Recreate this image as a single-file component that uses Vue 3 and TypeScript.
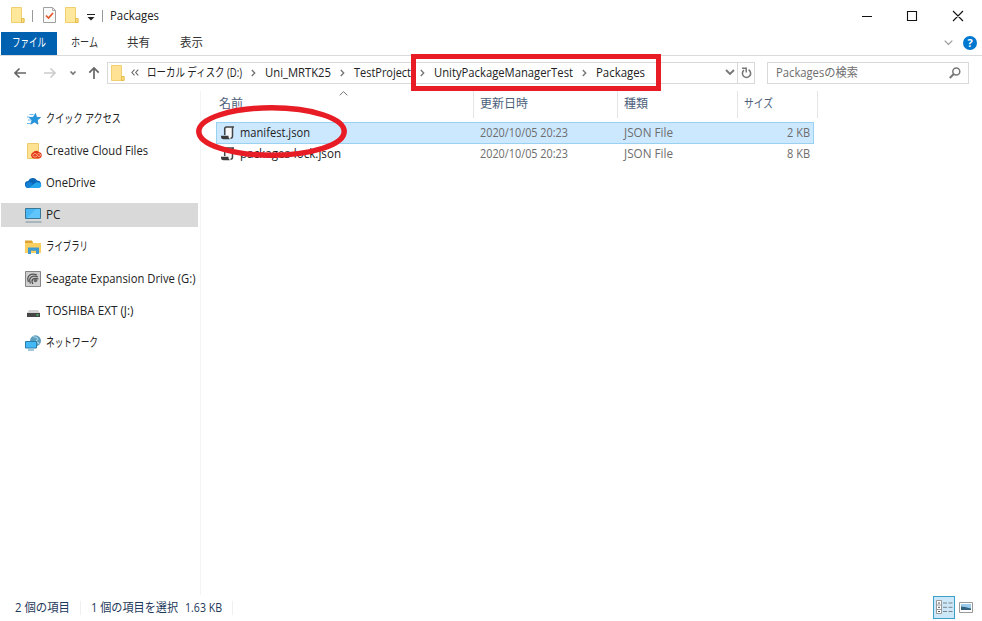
<script setup lang="ts">
import { h } from 'vue'

interface LabelProps { text: string; w: number }

const Label = (props: LabelProps) =>
  h('svg', { width: props.w, height: 20, style: 'display:block;flex:none;overflow:visible' }, [
    h('text', { x: 0, y: 14, fill: 'currentColor', textLength: props.w, lengthAdjust: 'spacingAndGlyphs' }, props.text),
  ])
Label.props = ['text', 'w']

const crumbs: LabelProps[] = [
  { text: 'ローカル ディスク (D:)', w: 95 },
  { text: 'Uni_MRTK25', w: 66 },
  { text: 'TestProject', w: 57 },
  { text: 'UnityPackageManagerTest', w: 139 },
  { text: 'Packages', w: 49 },
]

const places = [
  { id: 'quick', text: 'クイック アクセス', w: 75 },
  { id: 'cloud', text: 'Creative Cloud Files', w: 102 },
  { id: 'onedrive', text: 'OneDrive', w: 49.5 },
  { id: 'pc', text: 'PC', w: 14.5 },
  { id: 'library', text: 'ライブラリ', w: 42 },
  { id: 'seagate', text: 'Seagate Expansion Drive (G:)', w: 149.5 },
  { id: 'toshiba', text: 'TOSHIBA EXT (J:)', w: 87.5 },
  { id: 'network', text: 'ネットワーク', w: 52 },
]

const columns: LabelProps[] = [
  { text: '名前', w: 24 },
  { text: '更新日時', w: 48 },
  { text: '種類', w: 24 },
  { text: 'サイズ', w: 29 },
]

const files = [
  { name: 'manifest.json', w: 70, size: '2 KB', selected: true },
  { name: 'packages-lock.json', w: 101, size: '8 KB', selected: false },
]
</script>

<template>
  <div class="window">
    <header class="titlebar">
      <svg class="folder" width="14" height="16"><path d="M.5.5h10v11h2.500v4H.5z" fill="#ffe89c" stroke="#efcf70" /><path d="M10.500 11.500h2.500v4h-2.500z" fill="#ffdf7d" stroke="#e5bd4e" /></svg>
      <i class="bar first"></i>
      <svg class="check" width="13" height="16"><path d="M.5.5h9l3 3v12H.5z" fill="#fafafa" stroke="#a0a0a0" /><path d="M9.500.5v3h3" fill="none" stroke="#aaa" /><path d="M3 8.500l2.500 2.500 4.500-5" fill="none" stroke="#e4572b" stroke-width="1.700" /></svg>
      <svg class="folder second" width="14" height="16"><path d="M.5.5h10v11h2.500v4H.5z" fill="#ffe89c" stroke="#efcf70" /><path d="M10.500 11.500h2.500v4h-2.500z" fill="#ffdf7d" stroke="#e5bd4e" /></svg>
      <svg class="customize" width="8" height="8"><path d="M0 1.500h8" stroke="#222" /><path d="M.5 4h7L4 7.500z" fill="#222" /></svg>
      <i class="bar second-bar"></i>
      <Label text="Packages" :w="49" />
      <svg class="controls" width="104" height="12"><path d="M1 6.500h10M46.500 1.500h9v9h-9zM92 1l10 10M102 1L92 11" fill="none" stroke="#111" stroke-width="1.100" /></svg>
    </header>
    <nav class="tabs">
      <div class="tab file"><Label text="ファイル" :w="34" /></div>
      <div class="tab home"><Label text="ホーム" :w="27" /></div>
      <div class="tab share"><Label text="共有" :w="23" /></div>
      <div class="tab"><Label text="表示" :w="23" /></div>
      <svg class="expand" width="9" height="6"><path d="M.7.7l3.800 3.800L8.300.7" fill="none" stroke="#999" stroke-width="1.200" /></svg>
      <div class="help">?</div>
    </nav>
    <div class="addressbar">
      <svg class="nav-icons" width="88" height="14"><g fill="none" stroke-width="1.700"><path d="M13 7H2M6.500 2.500L2 7l4.500 4.500" stroke="#666" /><path d="M31 7h11M37.500 2.500L42 7l-4.500 4.500" stroke="#ccc" /><path d="M57.500 5.500l2.500 2.500 2.500-2.500" stroke="#777" /><path d="M81 13V2M76.300 6.700L81 2l4.700 4.700" stroke="#666" /></g></svg>
      <div class="path">
        <svg width="14" height="16"><path d="M.5.5h10v11h2.500v4H.5z" fill="#ffe293" stroke="#efcf70" /><path d="M10.500 11.500h2.500v4h-2.500z" fill="#ffdf7d" stroke="#e5bd4e" /></svg>
        <svg class="ancestors" width="8" height="7"><path d="M3.500.7L.9 3.500l2.600 2.800M7.300.7L4.700 3.500l2.600 2.800" fill="none" stroke="#666" stroke-width="1.100" /></svg>
        <template v-for="(c, i) in crumbs" :key="c.text">
          <svg v-if="i" class="sep" width="23" height="8"><path d="M9.800 1l2.900 3-2.900 3" fill="none" stroke="#777" stroke-width="1.400" /></svg>
          <Label :text="c.text" :w="c.w" />
        </template>
        <svg class="history" width="10" height="7"><path d="M1 1l4 4 4-4" fill="none" stroke="#777" stroke-width="1.900" /></svg>
        <div class="refresh">
          <svg width="11" height="12"><path d="M3 3.100A4.100 4.100 0 1 0 7.600 2.800" fill="none" stroke="#777" stroke-width="1.600" /><path d="M1 1.200h4.200v4.300" fill="none" stroke="#777" stroke-width="1.500" /></svg>
        </div>
      </div>
      <div class="search">
        <Label text="Packagesの検索" :w="82" />
        <svg width="12" height="12"><circle cx="7.300" cy="4.500" r="3.500" fill="none" stroke="#777" stroke-width="1.500" /><path d="M4.800 7L.8 11" stroke="#777" stroke-width="2" /></svg>
      </div>
    </div>
    <main class="body">
      <aside class="sidebar">
        <div v-for="p in places" :key="p.id" class="place" :class="{ active: p.id === 'pc' }">
          <svg class="place-icon" width="17" height="16" viewBox="0 0 17 16">
            <g v-if="p.id === 'quick'"><path d="M10.500 2.500l1 3.800 4 .2-3.200 2.600.7 4.100-3.500-2.200-3.800 2.200 1.400-4.200-3-2.500 4.200-.2z" fill="#2496e0" stroke="#2388cc" stroke-width=".8" /><path d="M4.500 3.500h4M2 6h2.500M3 9h3M2 12.500h3" stroke="#64baf0" /></g>
            <g v-else-if="p.id === 'cloud'"><path d="M2.500.5h11v15h-11z" fill="#ffe393" stroke="#eccb70" /><path d="M9 15.500a3.300 3.300 0 0 1-1-6.300 4 4 0 0 1 6-.2 3.300 3.300 0 0 1 0 6.500z" fill="#e33a1e" /><path d="M12 13.500c-5 2-5-3-2-3 2 0 2 3 4 3 2.500 0 2-4-1.500-2.500" fill="none" stroke="#ffb98a" stroke-width=".9" /></g>
            <g v-else-if="p.id === 'onedrive'"><path d="M3.500 13a3.500 3.500 0 0 1-.3-7A5 5 0 0 1 12 5.500 3.800 3.800 0 0 1 13 13z" fill="#0865b7" /><path d="M3 13l8-5.500c3-.9 5 .8 5.300 3.100 0 1.500-1.300 2.400-2.800 2.400z" fill="#23a5ee" /><path d="M.5 9.500c2-3 5-2.500 7-.8L3.800 13C1.800 13 .5 11.500.5 9.500z" fill="#1482d4" /></g>
            <g v-else-if="p.id === 'pc'"><path d="M.5 1.500h15v10H.5z" fill="#49b7f4" stroke="#397797" /><path d="M2 11L11 2h4v9z" fill="#6ccdff" opacity=".65" /><path d="M.5 15h16" stroke="#7692a5" /></g>
            <g v-else-if="p.id === 'library'"><path d="M0 2h7l1 2h8v10H0z" fill="#f9cf62" /><path d="M0 1.500h7l1 2.500H0z" fill="#dca332" /><path d="M3 15V8.500h11V15h-3v-3.300H6V15z" fill="#3f9bcf" /></g>
            <g v-else-if="p.id === 'seagate'"><path d="M.5.5h15v15H.5z" fill="#cfcfcf" stroke="#858585" /><path d="M3.500 11C1 5 6 1.500 12 4M5.500 12.500C3 7 7 3.500 13 6M8 13C5.500 9 8 6 13.500 8" fill="none" stroke="#555" stroke-width="1.300" /><circle cx="10.500" cy="9.500" r="1.800" fill="#666" /></g>
            <g v-else-if="p.id === 'toshiba'"><path d="M4 7h9l2 3H2z" fill="#d2d2d2" /><path d="M2 10h13v4H2z" fill="#454545" /><path d="M11.500 12h2" stroke="#53d67b" stroke-width="1.300" /></g>
            <g v-else><circle cx="10.500" cy="5.800" r="5.500" fill="#5b9dbd" /><path d="M8 1.500c2 1 3.500 0 4.500 2s-2 1-1 3 2 1 2.500 2.500" fill="none" stroke="#a4d0e3" stroke-width="1.300" /><path d="M.5 6.500h11v6.500H.5z" fill="#43b9f7" stroke="#287da9" /><path d="M3 15h6" stroke="#4391b9" /></g>
          </svg>
          <Label :text="p.text" :w="p.w" />
        </div>
      </aside>
      <section class="files">
        <div class="columns grid">
          <div v-for="c in columns" :key="c.text" class="column"><Label :text="c.text" :w="c.w" /></div>
          <svg class="sort" width="9" height="5"><path d="M.7 4.300L4.500.6l3.800 3.700" fill="none" stroke="#777" /></svg>
        </div>
        <div v-for="f in files" :key="f.name" class="row grid" :class="{ selected: f.selected }">
          <div class="name">
            <svg width="14" height="14"><path d="M4 1h8v9q0 2.500-2.500 2.500H5V1z" fill="#f8f8f8" /><path d="M3.700 9V3Q3.700 1 5.700 1H13M11.500 1.500V10q0 2.300-2 2.300" fill="none" stroke="#444" stroke-width="1.500" /><path d="M0 9.800h7.500v1.200q0 1 1.500 2.200H2.500Q0 13.200 0 11z" fill="#3b3b3b" /></svg>
            <Label :text="f.name" :w="f.w" />
          </div>
          <div class="detail"><Label text="2020/10/05 20:23" :w="88" /></div>
          <div class="detail"><Label text="JSON File" :w="49" /></div>
          <div class="detail size"><Label :text="f.size" :w="23" /></div>
        </div>
      </section>
    </main>
    <footer class="status">
      <Label text="2 個の項目" :w="55" /><i class="divider"></i>
      <Label text="1 個の項目を選択" :w="87" /><Label class="bytes" text="1.63 KB" :w="37" /><i class="divider last"></i>
      <div class="views">
        <div class="details-view"><svg width="17" height="15"><path d="M.5.500h5v13h-5zM.5 5h5M.5 9.500h5" fill="#fff" stroke="#999" /><path d="M2 3h2M2 7.300h2M2 11.500h2" stroke="#555" /><path d="M7 3h4M12.500 3h4M7 7.300h4M12.500 7.300h4M7 11.500h4M12.500 11.500h4" stroke="#7d8589" /></svg></div>
        <svg width="14" height="11"><path d="M.5.5h13v10H.5z" fill="#fff" stroke="#999" /><path d="M2 2h10v6H2z" fill="#9bcbed" /><path d="M2 4.500l4 .5 6 1.500V8H2z" fill="#34617e" /></svg>
      </div>
    </footer>
    <svg class="annotation" width="982" height="621"><g fill="none" stroke="#e81c25" stroke-width="5"><path d="M413.500 56.500h245v32h-245z" /><ellipse cx="271.500" cy="131.500" rx="72.700" ry="23.700" stroke-width="5.500" /></g></svg>
  </div>
</template>

<style>
body { margin: 0; background: #fff; }
</style>
<style scoped>
.window { position: relative; width: 982px; height: 621px; overflow: hidden; display: flex; flex-direction: column; background: #fff; color: #222; font: 12px "Open Sans", "Noto Sans CJK JP", sans-serif; }
.window * { box-sizing: border-box; }
svg { display: block; flex: none; }
.titlebar { height: 31px; display: flex; align-items: center; padding: 1px 0 0 11px; flex: none; }
.folder, .check { margin-bottom: 2px; }
.bar { width: 1px; height: 12px; margin-bottom: 1px; background: #999; }
.first { margin: 0 11px 1px 7px; }
.check { margin-left: -1px; }
.second { margin-left: 9px; }
.customize { margin: 2px 7px 0 8px; }
.second-bar { margin-right: 7px; }
.controls { margin-left: auto; margin-right: 17px; margin-bottom: 1px; }
.tabs { height: 25px; display: flex; align-items: center; border-bottom: 1px solid #dadbdc; flex: none; color: #333; }
.tab { display: flex; align-items: center; height: 23px; }
.file { width: 56px; margin: 0 14px 0 1px; padding-left: 11px; background: #0061b1; color: #fff; }
.home { margin-right: 29px; }
.share { margin-right: 30px; }
.expand { margin-left: auto; margin-right: 10px; }
.help { width: 14px; height: 14px; margin-right: 5px; border-radius: 50%; background: #0078d0; color: #fff; font-weight: 700; font-size: 11px; line-height: 14px; text-align: center; }
.addressbar { height: 35px; display: flex; align-items: center; padding: 0 13px 2px; flex: none; }
.nav-icons { margin-right: 6px; }
.path { height: 22px; width: 648px; border: 1px solid #d9d9d9; display: flex; align-items: center; padding-left: 3px; }
.ancestors { margin: 0 8px 0 6px; }
.history { margin-left: auto; margin-right: 2px; }
.refresh { width: 17px; height: 20px; padding-left: 1px; border-left: 1px solid #d9d9d9; display: flex; align-items: center; justify-content: center; }
.search { width: 202px; height: 22px; margin-left: 12px; padding: 0 7px 0 8px; border: 1px solid #d9d9d9; display: flex; align-items: center; justify-content: space-between; color: #6d6d6d; }
.body { flex: 1; display: flex; min-height: 0; }
.sidebar { width: 201px; padding: 16px 2px 0 1px; border-right: 1px solid #f4f4f4; display: flex; flex-direction: column; gap: 8px; }
.place { height: 24px; display: flex; align-items: center; gap: 4px; padding-left: 24px; }
.active { background: #d9d9d9; }
.files { width: 617px; }
.grid { display: grid; grid-template-columns: 257px 144px 120px 1fr; }
.columns { position: relative; height: 27px; margin-left: 16px; color: #4c607a; }
.column { display: flex; align-items: center; border-right: 1px solid #e5e5e5; padding: 0 0 1px 6px; }
.column:first-child { padding-left: 2px; }
.sort { position: absolute; left: 122px; top: 0; }
.row { height: 20px; width: 598px; margin-left: 15px; align-items: center; }
.selected { height: 22px; margin-top: 4px; background: #cce8ff; outline: 1px solid #99d1f3; outline-offset: -1px; }
.name { display: flex; align-items: center; gap: 5px; padding-left: 5px; }
.detail { color: #6d6d6d; padding-left: 7px; }
.size { display: flex; justify-content: flex-end; padding: 0 4px 0 0; }
.status { height: 25px; margin-bottom: 1px; display: flex; align-items: center; padding: 1px 9px 0 15px; color: #1e395b; flex: none; }
.divider { width: 1px; height: 14px; margin: 0 10px; background: #f0f0f0; }
.bytes { margin-left: 7px; }
.views { margin-left: auto; margin-bottom: 1px; display: flex; align-items: center; gap: 4px; }
.details-view { width: 22px; height: 23px; display: flex; align-items: center; justify-content: center; background: #cce8f8; border: 1px solid #3d9fc8; }
.annotation { position: absolute; inset: 0; pointer-events: none; }
</style>
